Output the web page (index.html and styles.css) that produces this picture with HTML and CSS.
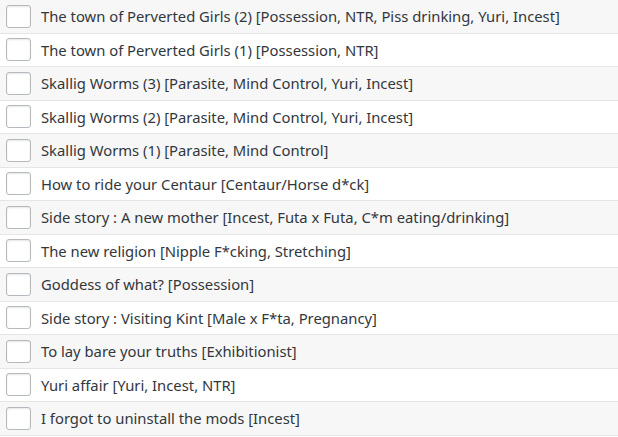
FILE: index.html
```html
<!DOCTYPE html>
<html>
<head>
<meta charset="utf-8">
<link rel="stylesheet" href="styles.css">
</head>
<body>
<ul class="list">
  <li class="row"><span class="box"></span><span class="label">The town of Perverted Girls (2) [Possession, NTR, Piss drinking, Yuri, Incest]</span></li>
  <li class="row"><span class="box"></span><span class="label">The town of Perverted Girls (1) [Possession, NTR]</span></li>
  <li class="row"><span class="box"></span><span class="label">Skallig Worms (3) [Parasite, Mind Control, Yuri, Incest]</span></li>
  <li class="row"><span class="box"></span><span class="label">Skallig Worms (2) [Parasite, Mind Control, Yuri, Incest]</span></li>
  <li class="row"><span class="box"></span><span class="label">Skallig Worms (1) [Parasite, Mind Control]</span></li>
  <li class="row"><span class="box"></span><span class="label">How to ride your Centaur [Centaur/Horse d*ck]</span></li>
  <li class="row"><span class="box"></span><span class="label">Side story : A new mother [Incest, Futa x Futa, C*m eating/drinking]</span></li>
  <li class="row"><span class="box"></span><span class="label">The new religion [Nipple F*cking, Stretching]</span></li>
  <li class="row"><span class="box"></span><span class="label">Goddess of what? [Possession]</span></li>
  <li class="row"><span class="box"></span><span class="label">Side story : Visiting Kint [Male x F*ta, Pregnancy]</span></li>
  <li class="row"><span class="box"></span><span class="label">To lay bare your truths [Exhibitionist]</span></li>
  <li class="row"><span class="box"></span><span class="label">Yuri affair [Yuri, Incest, NTR]</span></li>
  <li class="row"><span class="box"></span><span class="label">I forgot to uninstall the mods [Incest]</span></li>
</ul>
</body>
</html>
```
FILE: styles.css
```css
html, body {
  margin: 0;
  padding: 0;
  background: #ffffff;
}
.list {
  list-style: none;
  margin: 0;
  padding: 0;
  font-family: "Noto Sans", sans-serif;
  font-size: 14.8px;
  color: #32373c;
}
.row {
  display: flex;
  align-items: center;
  height: 33.5px;
  box-sizing: border-box;
  border-bottom: 1px solid #e5e5e5;
  padding-left: 6px;
  background: #ffffff;
}
.row:nth-child(odd) {
  background: #f7f7f7;
}
.box {
  flex: none;
  width: 25px;
  height: 23px;
  box-sizing: border-box;
  border: 1px solid #b4b9be;
  border-radius: 3px;
  background: #ffffff;
  box-shadow: inset 0 1px 2px rgba(0,0,0,0.1);
  margin-right: 10px;
}
.label {
  white-space: nowrap;
}
```
